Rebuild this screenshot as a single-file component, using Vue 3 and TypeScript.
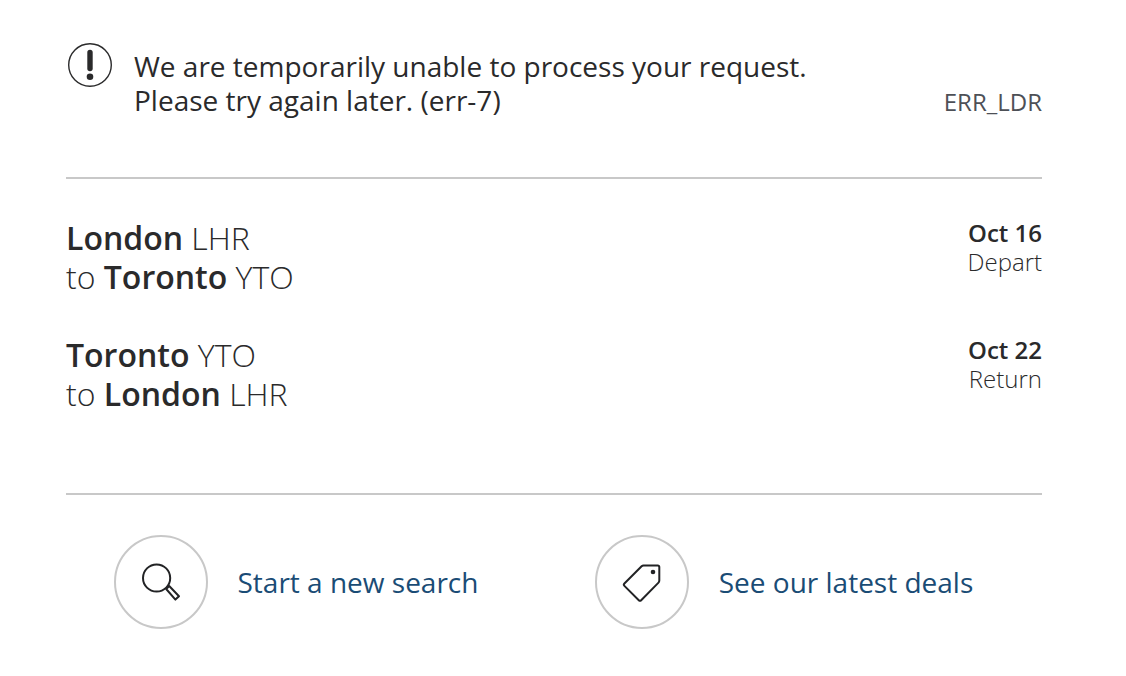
<script setup lang="ts">
interface Place {
  city: string
  code: string
}

interface Leg {
  from: Place
  to: Place
  date: string
  kind: string
}

const london: Place = { city: 'London', code: 'LHR' }
const toronto: Place = { city: 'Toronto', code: 'YTO' }

const legs: Leg[] = [
  { from: london, to: toronto, date: 'Oct 16', kind: 'Depart' },
  { from: toronto, to: london, date: 'Oct 22', kind: 'Return' },
]
</script>

<template>
  <main class="page">
    <section class="notice" role="alert">
      <svg class="notice-icon" viewBox="0 0 44 44" aria-hidden="true">
        <circle cx="22" cy="22" r="21.3" fill="none" stroke="#2a2a2b" stroke-width="1.4" />
        <path d="M22 9.5V25.5" stroke="#2a2a2b" stroke-width="5.4" stroke-linecap="round" />
        <circle cx="22" cy="33.8" r="3.3" fill="#2a2a2b" />
      </svg>
      <p class="message">
        We are temporarily unable to process your request.<br />
        Please try again later. (err-7)
      </p>
      <span class="code">ERR_LDR</span>
    </section>

    <section class="legs">
      <div v-for="leg in legs" :key="leg.kind" class="leg">
        <p class="route">
          <strong>{{ leg.from.city }}</strong> {{ leg.from.code }}<br />
          to <strong>{{ leg.to.city }}</strong> {{ leg.to.code }}
        </p>
        <p class="when">
          <strong>{{ leg.date }}</strong><br />
          {{ leg.kind }}
        </p>
      </div>
    </section>

    <nav class="actions">
      <a class="action" href="#search">
        <svg class="action-icon" viewBox="0 0 94 94" aria-hidden="true">
          <circle cx="47" cy="47" r="46" fill="none" stroke="#c8c8c8" stroke-width="2" />
          <g fill="none" stroke="#222325" stroke-width="2" stroke-linejoin="round">
            <circle cx="42.6" cy="43" r="13.6" />
            <path d="M52.2 54L55.2 51L65 61.2L61.4 64.6Z" />
          </g>
        </svg>
        <span>Start a new search</span>
      </a>
      <a class="action" href="#deals">
        <svg class="action-icon" viewBox="0 0 94 94" aria-hidden="true">
          <circle cx="47" cy="47" r="46" fill="none" stroke="#c8c8c8" stroke-width="2" />
          <path
            d="M48.5 30.4H62.7Q64.3 30.4 64.3 32V45.6Q64.3 46.8 63.5 47.6L46.2 65.2Q45 66.4 43.8 65.2L29.4 50.9Q28.2 49.7 29.4 48.5L46.6 31.2Q47.4 30.4 48.5 30.4Z"
            fill="none" stroke="#222325" stroke-width="2" stroke-linejoin="round"
          />
          <circle cx="58" cy="37" r="2.3" fill="#222325" />
        </svg>
        <span>See our latest deals</span>
      </a>
    </nav>
  </main>
</template>

<style>
body {
  margin: 0;
  background: #fff;
}
</style>

<style scoped>
.page {
  padding: 42px 84px 40px 66px;
  font-family: "Open Sans", "Noto Sans", sans-serif;
  font-kerning: normal;
  text-rendering: optimizeLegibility;
  color: #2a2a2b;
}

p {
  margin: 0;
}

.notice {
  display: flex;
  align-items: flex-start;
  padding-bottom: 59px;
  border-bottom: 2px solid #c8c8c8;
}

.notice-icon {
  flex: none;
  width: 44px;
  height: 44px;
  margin: 1px 22px 0 2px;
}

.message {
  flex: 1;
  padding: 7px 0 1px;
  font-size: 28px;
  line-height: 34px;
}

.code {
  align-self: flex-end;
  font-size: 24px;
  line-height: 32px;
  color: #4d5056;
}

.legs {
  display: flex;
  flex-direction: column;
  gap: 39px;
  padding: 39px 0 80px;
  border-bottom: 2px solid #c8c8c8;
}

.leg {
  display: flex;
  justify-content: space-between;
}

.route {
  font-size: 32px;
  font-weight: 300;
  line-height: 39px;
}

.when {
  font-size: 24px;
  font-weight: 300;
  line-height: 29px;
  text-align: right;
}

strong {
  font-weight: 600;
}

.actions {
  display: grid;
  grid-template-columns: 1fr 1fr;
  padding-top: 40px;
}

.action {
  display: flex;
  align-items: center;
  justify-content: center;
  gap: 30px;
  padding-right: 28px;
  font-size: 28px;
  line-height: 34px;
  color: #1a4c75;
  text-decoration: none;
}

.action-icon {
  flex: none;
  width: 94px;
  height: 94px;
}
</style>
